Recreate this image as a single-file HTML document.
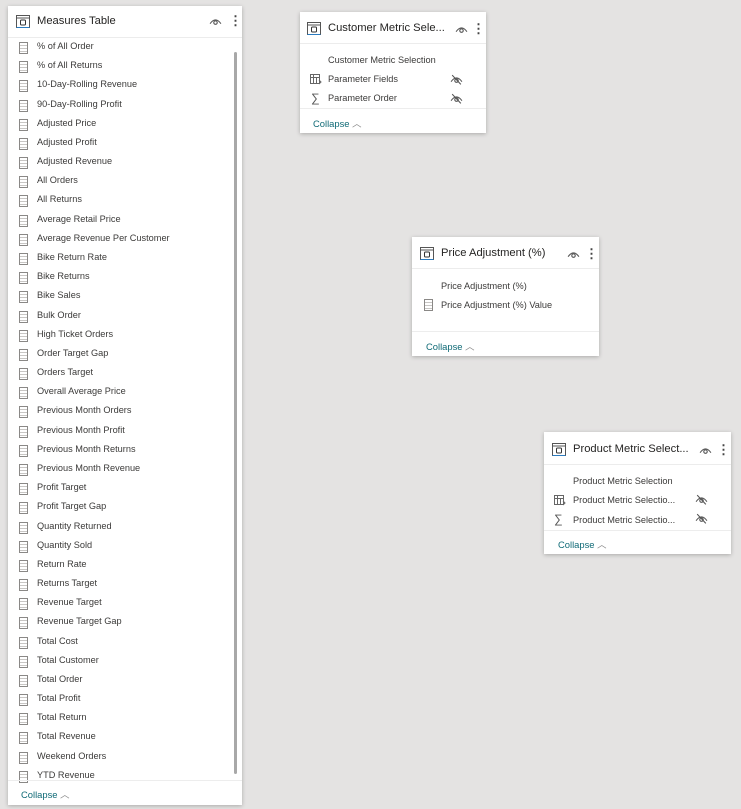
<!DOCTYPE html>
<html><head><meta charset="utf-8"><style>
body{margin:0;width:741px;height:809px;background:#e4e3e2;font-family:"Liberation Sans",sans-serif;position:relative;overflow:hidden}
.card{position:absolute;background:#fff;box-shadow:0 1px 4px rgba(0,0,0,.25)}
.hd{position:absolute;left:0;right:0;top:0;border-bottom:1px solid #ececec}
.ti{position:absolute;font-size:11.2px;color:#252423;white-space:nowrap}
.ticon{position:absolute;width:14px;height:13px}
.it{position:absolute;font-size:9.2px;color:#3b3a39;white-space:nowrap}
.col{position:absolute;font-size:9.4px;color:#0f6a76}
.col span{color:#888}
.calc{position:absolute;width:7px;height:10px;border:1px solid #8a8886;background:repeating-linear-gradient(#fff 0 2px,#c8c6c4 2px 3px)}
.ft{position:absolute;left:0;right:0;border-top:1px solid #ededed}
.dots{position:absolute;font-size:13px;color:#444;font-weight:bold;line-height:1}
</style></head><body>

<svg width="0" height="0" style="position:absolute">
<defs>
<symbol id="tbl" viewBox="0 0 14 13"><rect x="0.5" y="0.5" width="13" height="12" fill="none" stroke="#555"/><line x1="0.5" y1="3" x2="13.5" y2="3" stroke="#555"/><rect x="4.5" y="5" width="5" height="5" rx="1" fill="none" stroke="#333"/><line x1="0.5" y1="12.5" x2="13.5" y2="12.5" stroke="#2b7bbf"/></symbol>
<symbol id="eye" viewBox="0 0 12 8"><path d="M1 6 Q6 -1 11 6" fill="none" stroke="#555"/><circle cx="6" cy="5" r="1.6" fill="none" stroke="#555"/></symbol>
<symbol id="eyeh" viewBox="0 0 12 10"><path d="M1 7 Q6 0 11 7" fill="none" stroke="#555"/><circle cx="6" cy="6" r="1.6" fill="none" stroke="#555"/><line x1="2" y1="1" x2="10" y2="9.5" stroke="#555"/></symbol>
<symbol id="pf" viewBox="0 0 12 11"><rect x="0.5" y="0.5" width="9" height="9" fill="none" stroke="#666"/><line x1="0.5" y1="3.5" x2="9.5" y2="3.5" stroke="#666"/><line x1="3.5" y1="0.5" x2="3.5" y2="9.5" stroke="#666"/><line x1="6.5" y1="3.5" x2="6.5" y2="9.5" stroke="#666"/><path d="M9 6 l2 2 l-2 2" fill="none" stroke="#666"/></symbol>
</defs></svg>

<!-- Measures Table -->
<div class="card" style="left:8px;top:6px;width:234px;height:799px">
<div class="hd" style="height:31px"></div>
<svg class="ticon" style="left:8px;top:9px"><use href="#tbl"/></svg>
<div class="ti" style="left:29px;top:9px">Measures Table</div>
<svg style="position:absolute;left:201px;top:11px;width:13px;height:9px"><use href="#eye"/></svg>
<div class="dots" style="left:221px;top:8px">⋮</div>
<div style="position:absolute;left:226px;top:46px;width:3px;height:722px;background:#a8a8a8;border-radius:2px"></div>
<div id="list"></div>
<div class="ft" style="top:774px"></div>
<div class="col" style="left:13px;top:781px">Collapse <span>︿</span></div>
</div>

<!-- Customer -->
<div class="card" style="left:300px;top:12px;width:186px;height:121px">
<div class="hd" style="height:31px"></div>
<svg class="ticon" style="left:7px;top:10px"><use href="#tbl"/></svg>
<div class="ti" style="left:28px;top:10px">Customer Metric Sele...</div>
<svg style="position:absolute;left:155px;top:13px;width:13px;height:9px"><use href="#eye"/></svg>
<div class="dots" style="left:172px;top:10px">⋮</div>
<div class="it" style="left:28px;top:43px">Customer Metric Selection</div>
<svg style="position:absolute;left:10px;top:62px;width:12px;height:11px"><use href="#pf"/></svg>
<div class="it" style="left:28px;top:62px">Parameter Fields</div>
<svg style="position:absolute;left:150px;top:62px;width:13px;height:11px"><use href="#eyeh"/></svg>
<div class="it" style="left:11px;top:79px;font-size:12px;color:#555">∑</div>
<div class="it" style="left:28px;top:81px">Parameter Order</div>
<svg style="position:absolute;left:150px;top:81px;width:13px;height:11px"><use href="#eyeh"/></svg>
<div class="ft" style="top:96px"></div>
<div class="col" style="left:13px;top:104px">Collapse <span>︿</span></div>
</div>

<!-- Price -->
<div class="card" style="left:412px;top:237px;width:187px;height:119px">
<div class="hd" style="height:31px"></div>
<svg class="ticon" style="left:8px;top:10px"><use href="#tbl"/></svg>
<div class="ti" style="left:29px;top:10px">Price Adjustment (%)</div>
<svg style="position:absolute;left:155px;top:13px;width:13px;height:9px"><use href="#eye"/></svg>
<div class="dots" style="left:173px;top:10px">⋮</div>
<div class="it" style="left:29px;top:44px">Price Adjustment (%)</div>
<div class="calc" style="left:12px;top:62px"></div>
<div class="it" style="left:29px;top:63px">Price Adjustment (%) Value</div>
<div class="ft" style="top:94px"></div>
<div class="col" style="left:14px;top:102px">Collapse <span>︿</span></div>
</div>

<!-- Product -->
<div class="card" style="left:544px;top:432px;width:187px;height:122px">
<div class="hd" style="height:32px"></div>
<svg class="ticon" style="left:8px;top:11px"><use href="#tbl"/></svg>
<div class="ti" style="left:29px;top:11px">Product Metric Select...</div>
<svg style="position:absolute;left:155px;top:14px;width:13px;height:9px"><use href="#eye"/></svg>
<div class="dots" style="left:173px;top:11px">⋮</div>
<div class="it" style="left:29px;top:44px">Product Metric Selection</div>
<svg style="position:absolute;left:10px;top:63px;width:12px;height:11px"><use href="#pf"/></svg>
<div class="it" style="left:29px;top:63px">Product Metric Selectio...</div>
<svg style="position:absolute;left:151px;top:62px;width:13px;height:11px"><use href="#eyeh"/></svg>
<div class="it" style="left:10px;top:80px;font-size:12px;color:#555">∑</div>
<div class="it" style="left:29px;top:83px">Product Metric Selectio...</div>
<svg style="position:absolute;left:151px;top:81px;width:13px;height:11px"><use href="#eyeh"/></svg>
<div class="ft" style="top:98px"></div>
<div class="col" style="left:14px;top:105px">Collapse <span>︿</span></div>
</div>

<script>
var n=["% of All Order","% of All Returns","10-Day-Rolling Revenue","90-Day-Rolling Profit","Adjusted Price","Adjusted Profit","Adjusted Revenue","All Orders","All Returns","Average Retail Price","Average Revenue Per Customer","Bike Return Rate","Bike Returns","Bike Sales","Bulk Order","High Ticket Orders","Order Target Gap","Orders Target","Overall Average Price","Previous Month Orders","Previous Month Profit","Previous Month Returns","Previous Month Revenue","Profit Target","Profit Target Gap","Quantity Returned","Quantity Sold","Return Rate","Returns Target","Revenue Target","Revenue Target Gap","Total Cost","Total Customer","Total Order","Total Profit","Total Return","Total Revenue","Weekend Orders","YTD Revenue"];
var h="";for(var i=0;i<n.length;i++){var y=35+i*19.18;h+='<div class="calc" style="left:11px;top:'+(y+1)+'px"></div><div class="it" style="left:29px;top:'+y+'px">'+n[i]+'</div>';}
document.getElementById("list").innerHTML=h;
</script>
</body></html>
